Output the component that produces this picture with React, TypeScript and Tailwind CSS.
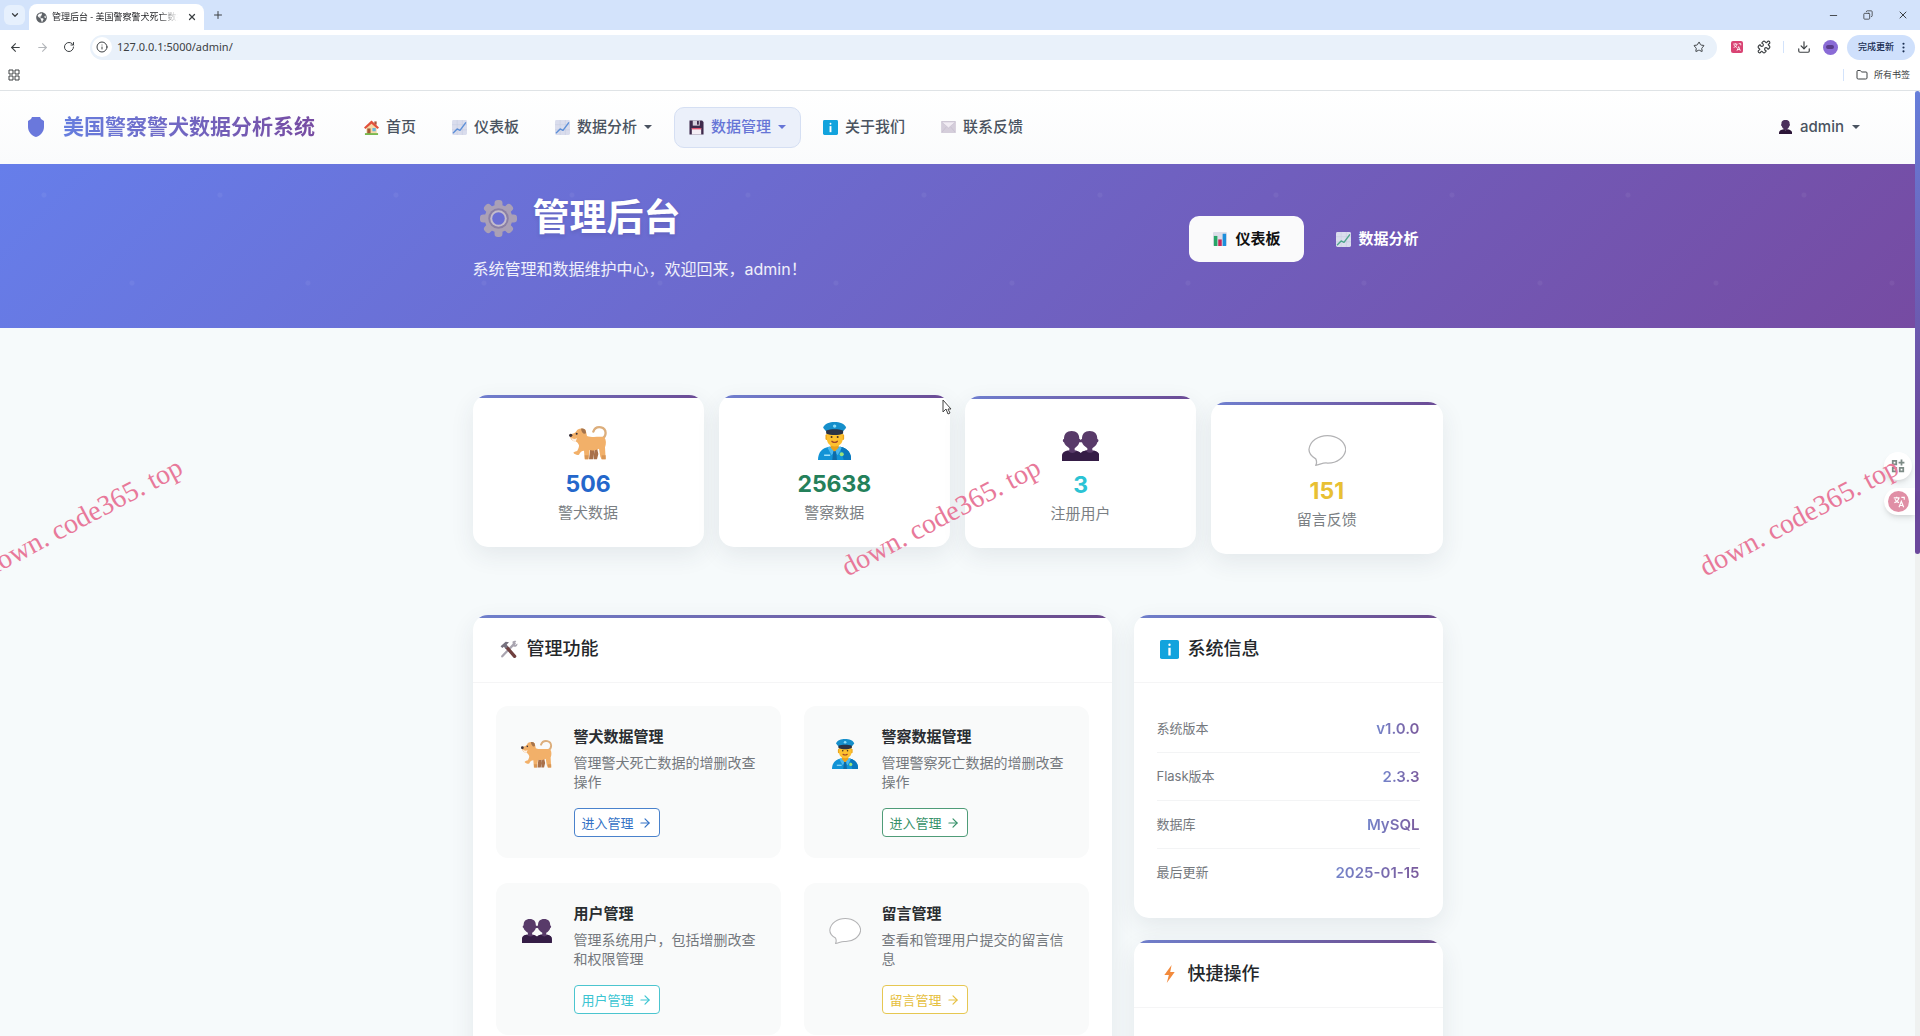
import type { ReactNode } from "react";
import {
  ArrowLeft,
  ArrowRight,
  ChevronDown,
  Copy,
  Download,
  EllipsisVertical,
  Folder,
  Info,
  LayoutGrid,
  Minus,
  Plus,
  Puzzle,
  RotateCw,
  Star,
  X,
} from "lucide-react";
import { FaGlobeAmericas } from "react-icons/fa";

type IconProps = { className?: string };

function DogIcon({ className }: IconProps) {
  return (
    <svg viewBox="0 0 114 102" className={className} aria-hidden="true">
      <path d="M98 38C114 32 114 8 96 4C84 2 76 8 73 17" fill="none" stroke="#dcae7c" strokeWidth="7" strokeLinecap="round" />
      <path d="M64 66L60 100H72L78 68ZM84 66L88 84L84 100H74L76 68Z" fill="#a9714b" />
      <path d="M22 16C26 6 42 5 50 12L54 30C70 36 92 30 106 34C112 42 112 54 108 64L110 100H98L94 92L90 68C80 74 68 74 62 72L58 100H47L45 74C38 74 34 78 30 86C24 88 17 85 13 80C16 76 22 76 25 74C28 68 30 64 30 58C28 52 24 48 20 46C12 46 6 42 3 32L6 24C12 24 18 22 22 16Z" fill="#f2b069" />
      <path d="M36 8C46 6 51 12 51 22C44 26 38 20 36 8Z" fill="#a5744d" />
      <path d="M6 34C12 40 18 40 24 36L20 47C12 47 8 42 6 34Z" fill="#fff1e4" />
      <circle cx="5" cy="28" r="5" fill="#38303a" />
      <circle cx="23" cy="23" r="3" fill="#38303a" />
      <path d="M47 88H59L58 100H48ZM98 88H110V100H98Z" fill="#d99655" />
    </svg>
  );
}

function OfficerIcon({ className }: IconProps) {
  return (
    <svg viewBox="0 0 98 112" className={className} aria-hidden="true">
      <path d="M0 112C0 90 12 77 32 73H66C86 77 98 90 98 112Z" fill="#1293d6" />
      <path d="M66 73C86 77 98 90 98 112H76L68 84Z" fill="#0b78bd" />
      <path d="M37 60H61V78L49 90L37 78Z" fill="#e8a21c" />
      <path d="M34 72L48 88L40 98L28 76ZM64 72L49 88L58 98L70 76Z" fill="#4bb8ee" />
      <path d="M45 86H53L56 112H42Z" fill="#0f6ba8" />
      <rect x="22" y="36" width="8" height="17" rx="4" fill="#eca51d" />
      <rect x="69" y="36" width="8" height="17" rx="4" fill="#eca51d" />
      <path d="M26 28H73V48C73 64 62 72 49 72C36 72 26 64 26 48Z" fill="#fdc02f" />
      <path d="M15 17C20 4 34 0 49 0C64 0 78 4 83 17L73 29H25Z" fill="#168fcb" />
      <path d="M24 25C38 20 60 20 74 25V34C60 40 38 40 24 34Z" fill="#2b3345" />
      <circle cx="49" cy="12" r="5" fill="#8edcf8" />
      <circle cx="40" cy="44" r="3" fill="#43302b" />
      <circle cx="58" cy="44" r="3" fill="#43302b" />
      <path d="M41 57Q49 63 57 57" fill="none" stroke="#a34a26" strokeWidth="4" strokeLinecap="round" />
      <circle cx="70" cy="95" r="6" fill="#9be37a" />
      <path d="M18 98H36" stroke="#9fe2fb" strokeWidth="4" />
    </svg>
  );
}

function UsersIcon({ className }: IconProps) {
  return (
    <svg viewBox="0 0 112 90" className={className} aria-hidden="true">
      <path d="M0 88V76C0 62 10 60 22 58V52C14 46 8 42 6 34C1 32 2 24 6 24C6 8 14 0 29 0C44 0 52 8 52 24C56 24 57 32 52 34C50 42 44 48 38 52V58C50 60 58 64 58 76V88Z" fill="#583a69" />
      <path d="M60 88V76C60 62 66 60 76 57V52C68 46 62 42 60 34C56 32 56 24 60 24C60 8 68 0 83 0C98 0 106 8 106 24C110 24 111 32 106 34C104 42 98 48 91 52V58C104 60 112 64 112 76V88Z" fill="#583a69" />
      <path d="M52 26H62V34H52Z" fill="#583a69" />
      <path d="M0 90V74C2 64 10 60 18 59Q30 72 44 60Q56 64 56 66Q62 58 72 59Q84 72 96 59C106 62 112 66 112 76V90Z" fill="#351d46" />
    </svg>
  );
}

function PersonIcon({ className }: IconProps) {
  return (
    <svg viewBox="0 0 58 62" className={className} aria-hidden="true">
      <path d="M29 0C44 0 48 8 47 18C50 20 48 26 46 27C44 34 40 38 37 40V44H21V40C18 38 14 34 12 27C9 26 8 20 11 18C10 8 14 0 29 0Z" fill="#4b305c" />
      <path d="M0 62V56C1 46 10 43 20 41Q29 50 38 41C48 43 57 46 58 56V62Z" fill="#2c1538" />
    </svg>
  );
}

function BubbleIcon({ className }: IconProps) {
  return (
    <svg viewBox="0 0 120 96" className={className} aria-hidden="true">
      <path d="M24 94C28 86 27 80 24 74C10 66 3 56 3 45C6 18 32 2 60 2C88 2 114 18 117 45C114 70 88 88 60 87C50 84 36 92 24 94Z" fill="#fff" stroke="#b3b3b5" strokeWidth="4" strokeLinejoin="round" />
    </svg>
  );
}

function GearIcon({ className }: IconProps) {
  return (
    <svg viewBox="0 0 112 112" className={className} aria-hidden="true">
      <g fill="#aaa0b6">
        {[0, 45, 90, 135].map((angle) => (
          <rect key={angle} x="44" y="0" width="24" height="112" rx="10" transform={`rotate(${angle} 56 56)`} />
        ))}
        <circle cx="56" cy="56" r="42" />
      </g>
      <circle cx="56" cy="56" r="31" fill="#8a7fa5" />
      <circle cx="56" cy="56" r="25" fill="#c4bccb" />
      <circle cx="56" cy="56" r="19" fill="#6a6ed4" />
    </svg>
  );
}

function HouseIcon({ className }: IconProps) {
  return (
    <svg viewBox="0 0 32 32" className={className} aria-hidden="true">
      <path d="M5 14L16 5L27 14V30H5Z" fill="#f5d9a8" />
      <path d="M22 3H27V10H22Z" fill="#a8573c" />
      <path d="M16 1L32 16L29 19L16 8L3 19L0 16Z" fill="#e2503c" />
      <path d="M7 18H14V30H7Z" fill="#a55a35" />
      <path d="M18 17H25V24H18Z" fill="#67b7dc" />
      <path d="M2 28H30V32H2Z" fill="#79b84f" />
    </svg>
  );
}

function TrendIcon({ className, line = "#5c8fd8" }: IconProps & { line?: string }) {
  return (
    <svg viewBox="0 0 32 32" className={className} aria-hidden="true">
      <rect width="32" height="32" rx="3" fill="#dadded" />
      <path d="M0 10H32M0 21H32M11 0V32M22 0V32" stroke="#c3c9de" strokeWidth="1" />
      <path d="M3 27L11 19L17 22L29 6" fill="none" stroke={line} strokeWidth="3" strokeLinecap="round" strokeLinejoin="round" />
    </svg>
  );
}

function BarsIcon({ className }: IconProps) {
  return (
    <svg viewBox="0 0 32 32" className={className} aria-hidden="true">
      <rect width="32" height="32" rx="3" fill="#dcdde8" />
      <path d="M2 9H10V32H2Z" fill="#27a567" />
      <path d="M12 17H20V32H12Z" fill="#c92658" />
      <path d="M22 4H30V32H22Z" fill="#1c8edb" />
    </svg>
  );
}

function FloppyIcon({ className }: IconProps) {
  return (
    <svg viewBox="0 0 32 32" className={className} aria-hidden="true">
      <path d="M1 1H28L31 4V31H1Z" fill="#3f2a4c" />
      <path d="M8 1H23V12H8Z" fill="#d8d2df" />
      <path d="M17 2H21V10H17Z" fill="#3f2a4c" />
      <path d="M6 17H26V31H6Z" fill="#f4eef5" />
      <path d="M6 17H26V20H6Z" fill="#e2526e" />
    </svg>
  );
}

function InfoSquareIcon({ className }: IconProps) {
  return (
    <svg viewBox="0 0 32 32" className={className} aria-hidden="true">
      <rect width="32" height="32" rx="3" fill="#12a3dd" />
      <circle cx="16" cy="8" r="2" fill="#fff" />
      <path d="M14 13H18V26H14Z" fill="#fff" />
    </svg>
  );
}

function EnvelopeIcon({ className }: IconProps) {
  return (
    <svg viewBox="0 0 32 26" className={className} aria-hidden="true">
      <rect width="32" height="26" rx="2" fill="#d5cedb" />
      <path d="M1 25L12 12M31 25L20 12" stroke="#bcb3c6" strokeWidth="1" />
      <path d="M1 2H31L16 15Z" fill="#f1ecf3" stroke="#bcb3c6" strokeWidth="1" />
    </svg>
  );
}

function ToolsIcon({ className }: IconProps) {
  return (
    <svg viewBox="0 0 32 32" className={className} aria-hidden="true">
      <path d="M4 29L26 6" stroke="#a9a5b0" strokeWidth="4" strokeLinecap="round" />
      <path d="M22 3C25 1 27 1 29 2L25 6L27 9L31 6C32 10 28 13 24 12Z" fill="#a9a5b0" />
      <path d="M12 13L26 29" stroke="#70403f" strokeWidth="6" strokeLinecap="round" />
      <path d="M1 11L10 3L16 4L12 8L14 12L10 16L7 12L4 14Z" fill="#77727f" />
    </svg>
  );
}

function BoltIcon({ className }: IconProps) {
  return (
    <svg viewBox="0 0 32 52" className={className} aria-hidden="true">
      <path d="M22 0L1 29H14L8 52L31 20H18Z" fill="#f28a3c" />
    </svg>
  );
}

function ShieldIcon({ className }: IconProps) {
  return (
    <svg viewBox="0 0 16 20" className={className} aria-hidden="true">
      <path d="M4 0H12L13 2L16 4V10C16 15 12 19 8 20C4 19 0 15 0 10V4L3 2Z" fill="#6a78dc" />
    </svg>
  );
}

function Caret() {
  return <span className="border-x-4 border-t-4 border-x-transparent border-t-current" />;
}

function TranslateMark({ className }: IconProps) {
  return (
    <svg viewBox="0 0 24 24" className={className} fill="none" stroke="#fff" strokeWidth="2" aria-hidden="true">
      <path d="M3 5H13M8 3V5M4 13C8 12 11 9 12 5M5 7C6 10 9 12 12 13M12 21L16 11L20 21M13 18H19M16 4H21V8" />
    </svg>
  );
}

const navItems = [
  { label: "首页", icon: <HouseIcon className="size-[15px]" /> },
  { label: "仪表板", icon: <TrendIcon className="size-[15px]" /> },
  { label: "数据分析", icon: <TrendIcon className="size-[15px]" />, menu: true },
  { label: "数据管理", icon: <FloppyIcon className="size-[15px]" />, menu: true, active: true },
  { label: "关于我们", icon: <InfoSquareIcon className="size-[15px]" /> },
  { label: "联系反馈", icon: <EnvelopeIcon className="h-3 w-[15px]" /> },
];

const stats = [
  { label: "警犬数据", value: "506", color: "text-[#2467cb]", rise: "mt-0", icon: <DogIcon className="h-[34px]" /> },
  { label: "警察数据", value: "25638", color: "text-[#24805a]", rise: "mt-0", icon: <OfficerIcon className="h-[38px]" /> },
  { label: "注册用户", value: "3", color: "text-[#2bc3d4]", rise: "mt-px", icon: <UsersIcon className="h-[30px]" /> },
  { label: "留言反馈", value: "151", color: "text-[#e8c033]", rise: "mt-[7px]", icon: <BubbleIcon className="h-8 pb-px" /> },
];

const features = [
  {
    title: "警犬数据管理",
    text: "管理警犬死亡数据的增删改查操作",
    action: "进入管理",
    tone: "border-[#4a82cc] text-[#3472c6]",
    icon: <DogIcon className="h-7" />,
  },
  {
    title: "警察数据管理",
    text: "管理警察死亡数据的增删改查操作",
    action: "进入管理",
    tone: "border-[#4f9c78] text-[#37926a]",
    icon: <OfficerIcon className="h-[30px]" />,
  },
  {
    title: "用户管理",
    text: "管理系统用户，包括增删改查和权限管理",
    action: "用户管理",
    tone: "border-[#4cc5cf] text-[#3cc5d2]",
    icon: <UsersIcon className="h-6" />,
  },
  {
    title: "留言管理",
    text: "查看和管理用户提交的留言信息",
    action: "留言管理",
    tone: "border-[#e6c752] text-[#e6c040]",
    icon: <BubbleIcon className="h-[26px]" />,
  },
];

const systemInfo = [
  { label: "系统版本", value: "v1.0.0" },
  { label: "Flask版本", value: "2.3.3" },
  { label: "数据库", value: "MySQL" },
  { label: "最后更新", value: "2025-01-15" },
];

function BrowserChrome() {
  return (
    <div className="shrink-0 bg-white font-['Noto_Sans','Noto_Sans_CJK_SC',sans-serif] text-[#3c4043]">
      <div className="flex h-[30px] items-center bg-[#d3e3fb] pl-1">
        <button type="button" aria-label="搜索标签页" className="mr-1 flex h-5 w-[21px] items-center justify-center rounded-md bg-[#e6f0fd]">
          <ChevronDown className="size-[10px]" strokeWidth={3} />
        </button>
        <div className="flex h-[26px] w-[175px] items-center gap-[5px] self-end rounded-t-lg bg-white px-[7px]">
          <FaGlobeAmericas className="size-[11px] shrink-0 text-[#5f6368]" />
          <span className="flex-1 overflow-hidden bg-linear-to-r from-[#202124] from-85% to-transparent bg-clip-text text-[9px] leading-4 whitespace-nowrap text-transparent">
            管理后台 - 美国警察警犬死亡数据
          </span>
          <button type="button" aria-label="关闭标签页" className="ml-1">
            <X className="size-[10px]" strokeWidth={3} />
          </button>
        </div>
        <button type="button" aria-label="新标签页" className="ml-2">
          <Plus className="size-3" />
        </button>
        <div className="ml-auto flex items-center gap-6 pr-[11px]">
          <button type="button" aria-label="最小化"><Minus className="size-[11px]" /></button>
          <button type="button" aria-label="还原"><Copy className="size-[10px] -scale-x-100" /></button>
          <button type="button" aria-label="关闭"><X className="size-3" /></button>
        </div>
      </div>

      <div className="flex h-[34px] items-center pr-[5px] pl-[9px]">
        <div className="flex w-[81px] items-center gap-[14px]">
          <button type="button" aria-label="后退"><ArrowLeft className="size-[13px]" /></button>
          <button type="button" aria-label="前进" className="text-[#b4b7bb]"><ArrowRight className="size-[13px]" /></button>
          <button type="button" aria-label="重新加载"><RotateCw className="size-3" /></button>
        </div>
        <div className="flex h-[25px] flex-1 items-center gap-[5px] rounded-full bg-[#e9f1fa] pr-3 pl-[2px]">
          <span className="flex size-5 items-center justify-center rounded-full bg-white">
            <Info className="size-3" />
          </span>
          <input aria-label="地址" className="flex-1 bg-transparent text-[11px] leading-4 outline-none" defaultValue="127.0.0.1:5000/admin/" />
          <button type="button" aria-label="收藏"><Star className="size-3" /></button>
        </div>
        <span className="ml-[14px] flex size-3 items-center justify-center rounded-[2px] bg-[#d94373]">
          <TranslateMark className="size-[10px]" />
        </span>
        <button type="button" aria-label="扩展程序" className="ml-[14px]"><Puzzle className="size-[14px]" /></button>
        <span className="ml-3 h-3 w-px bg-[#d3e3fb]" />
        <button type="button" aria-label="下载" className="ml-[13px]"><Download className="size-[14px]" /></button>
        <span className="ml-3 flex size-[15px] items-center justify-center rounded-full bg-[#8a6bd6]">
          <span className="h-1 w-2 rounded-full bg-[#5a3c8c]" />
        </span>
        <button type="button" className="ml-[9px] flex h-[25px] items-center gap-[3px] rounded-full bg-[#cfe0fc] pr-[5px] pl-[11px] text-[9px] leading-4 font-medium text-[#1b2f52]">
          完成更新
          <EllipsisVertical className="size-[13px]" />
        </button>
      </div>

      <div className="flex h-[27px] items-center border-b border-[#dfe3e6] pr-[10px] pb-1 pl-2">
        <svg viewBox="0 0 12 12" className="size-3" fill="none" stroke="currentColor" strokeWidth="1" aria-hidden="true">
          <path d="M1 1H5V5H1ZM7 1H11V5H7ZM1 7H5V11H1ZM7 7H11V11H7Z" />
        </svg>
        <span className="ml-auto h-3 w-px bg-[#d3e3fb]" />
        <button type="button" className="ml-3 flex items-center gap-[6px] text-[9px] leading-4">
          <Folder className="size-3" />
          所有书签
        </button>
      </div>
    </div>
  );
}

function Navbar() {
  return (
    <nav className="flex h-[73px] items-center bg-linear-to-b from-white to-[#fafbfc] pr-[40px] pb-px pl-7 text-[15px] leading-6 font-medium text-[#4a5360]">
      <a href="#home" className="flex items-center gap-[19px] text-[21px] leading-8 font-bold">
        <ShieldIcon className="h-5 w-4" />
        <span className="bg-linear-to-r from-[#667edf] to-[#764ba2] bg-clip-text text-transparent">
          美国警察警犬数据分析系统
        </span>
      </a>
      <div className="ml-[35px] flex items-center gap-2">
        {navItems.map((item) => {
          const className = item.active
            ? "flex h-[41px] items-center gap-[7px] rounded-[10px] border border-[#d5dff3] bg-[#ebf0fa] px-[14px] text-[#6675d6]"
            : "flex h-[41px] items-center gap-[7px] px-[14px]";
          return item.menu ? (
            <button key={item.label} type="button" className={className}>
              {item.icon}
              {item.label}
              <Caret />
            </button>
          ) : (
            <a key={item.label} href={`#${item.label}`} className={className}>
              {item.icon}
              {item.label}
            </a>
          );
        })}
      </div>
      <button type="button" className="ml-auto flex items-center gap-2 px-[15px]">
        <PersonIcon className="h-[14px]" />
        admin
        <Caret />
      </button>
    </nav>
  );
}

function Hero() {
  return (
    <header className="bg-[radial-gradient(circle_at_44px_31px,rgba(255,255,255,.05)_2px,transparent_3px),radial-gradient(circle_at_132px_119px,rgba(255,255,255,.05)_2px,transparent_3px),linear-gradient(135deg,#667eea,#764ba2)] bg-size-[176px_164px,176px_164px,100%_100%] pt-8 pb-[46px] text-white">
      <div className="mx-auto flex max-w-[970px] items-center justify-between">
        <div>
          <h1 className="flex items-center gap-4 pl-[7px] text-[37px] leading-[44px] font-bold [text-shadow:0_2px_4px_rgba(0,0,0,.1)]">
            <GearIcon className="size-[37px]" />
            管理后台
          </h1>
          <p className="mt-4 text-[16px] leading-[26px] text-white/90">系统管理和数据维护中心，欢迎回来，admin！</p>
        </div>
        <div className="flex gap-2 text-[15px] leading-6 font-bold">
          <a href="#dashboard" className="flex h-[46px] items-center gap-2 rounded-[10px] bg-[#fafafb] px-6 text-[#111]">
            <BarsIcon className="size-[14px]" />
            仪表板
          </a>
          <a href="#analysis" className="flex h-[46px] items-center gap-[7px] px-6">
            <TrendIcon className="size-[15px]" line="#4fa58c" />
            数据分析
          </a>
        </div>
      </div>
    </header>
  );
}

function Panel({ title, icon, children }: { title: string; icon: ReactNode; children: ReactNode }) {
  return (
    <section className="overflow-hidden rounded-[15px] bg-white shadow-[0_8px_25px_rgba(40,60,80,.09)]">
      <div className="h-[3px] bg-linear-to-r from-[#6f80cc] to-[#6b4a8c]" />
      <h2 className="flex h-[65px] items-center gap-2 border-b border-[#f5f5f6] px-[26px] pb-[2px] text-[18px] leading-7 font-medium text-[#24272b]">
        <span className="flex w-5 justify-center">{icon}</span>
        {title}
      </h2>
      {children}
    </section>
  );
}

function Watermark({ className }: { className: string }) {
  return (
    <span className={`pointer-events-none absolute top-[517px] -translate-x-1/2 -translate-y-1/2 -rotate-28 font-['Liberation_Serif',serif] text-[28px] leading-8 whitespace-nowrap text-[#e8799a] ${className}`}>
      down. code365. top
    </span>
  );
}

export default function App() {
  return (
    <div className="relative flex h-screen flex-col overflow-hidden bg-[#f6fafb] font-['Inter','Noto_Sans_CJK_SC',sans-serif]">
      <BrowserChrome />

      <div className="flex min-h-0 flex-1">
        <div className="min-w-0 flex-1 overflow-hidden">
          <Navbar />
          <Hero />

          <main className="mx-auto max-w-[970px] pt-[67px]">
            <div className="grid grid-cols-4 items-start gap-[15px]">
              {stats.map((stat) => (
                <div key={stat.label} className={`overflow-hidden rounded-[15px] bg-white pb-[22px] text-center shadow-[0_8px_25px_rgba(40,60,80,.09)] ${stat.rise}`}>
                  <div className="h-[3px] bg-linear-to-r from-[#6f80d0] to-[#6b4a94]" />
                  <div className="mt-6 flex h-[38px] items-end justify-center">{stat.icon}</div>
                  <p className={`mt-[10px] text-[23px] leading-7 font-bold ${stat.color}`}>{stat.value}</p>
                  <p className="mt-[3px] text-[15px] leading-6 text-[#7b7f84]">{stat.label}</p>
                </div>
              ))}
            </div>

            <div className="mt-[61px] grid grid-cols-[639fr_309fr] items-start gap-[22px]">
              <Panel title="管理功能" icon={<ToolsIcon className="size-[18px]" />}>
                <div className="grid grid-cols-2 gap-x-[23px] gap-y-[25px] p-[23px]">
                  {features.map((feature) => (
                    <div key={feature.title} className="flex gap-[18px] rounded-xl bg-[#f9fafa] px-[23px] py-[21px]">
                      <div className="mt-3 flex h-[30px] w-[37px] shrink-0 items-center justify-center">{feature.icon}</div>
                      <div>
                        <h3 className="text-[15px] leading-5 font-bold text-[#2a2d31]">{feature.title}</h3>
                        <p className="mt-[6px] text-[14px] leading-[19px] text-[#74787d]">{feature.text}</p>
                        <a href={`#${feature.title}`} className={`mt-[17px] inline-flex h-[29px] items-center gap-1 rounded-[4px] border bg-white px-[7px] text-[13px] leading-4 ${feature.tone}`}>
                          {feature.action}
                          <ArrowRight className="size-[14px]" />
                        </a>
                      </div>
                    </div>
                  ))}
                </div>
              </Panel>

              <div className="flex flex-col gap-[22px]">
                <Panel title="系统信息" icon={<InfoSquareIcon className="size-[19px]" />}>
                  <dl className="divide-y divide-[#f3f4f5] px-[23px] py-[22px]">
                    {systemInfo.map((row) => (
                      <div key={row.label} className="flex items-center justify-between py-3">
                        <dt className="text-[13px] leading-[23px] text-[#74787d]">{row.label}</dt>
                        <dd className="bg-linear-to-r from-[#7484ca] to-[#7a5a9c] bg-clip-text text-[15px] leading-[23px] font-semibold text-transparent">{row.value}</dd>
                      </div>
                    ))}
                  </dl>
                </Panel>
                <Panel title="快捷操作" icon={<BoltIcon className="h-[18px]" />}>
                  <div className="h-40" />
                </Panel>
              </div>
            </div>
          </main>
        </div>

        <div className="w-[5px] shrink-0 bg-[#eff1f0]">
          <div className="h-[49%] rounded-full bg-linear-to-b from-[#667eda] to-[#6b489c] to-75%" />
        </div>
      </div>

      <button type="button" aria-label="小工具" className="absolute top-[452px] right-2 flex size-7 items-center justify-center rounded-full bg-white shadow-md">
        <svg viewBox="0 0 24 24" className="size-[14px]" fill="none" stroke="#7d8b86" strokeWidth="3" aria-hidden="true">
          <path d="M3 3H9V9H3ZM3 15H9V21H3ZM15 15H21V21H15ZM18 1V11M13 6H23" />
        </svg>
      </button>
      <button type="button" aria-label="翻译" className="absolute top-[488px] right-[5px] flex h-[27px] w-[31px] items-center rounded-l-full bg-white pl-1 shadow-md">
        <span className="flex size-[21px] items-center justify-center rounded-full bg-[#e08fa6]">
          <TranslateMark className="size-[14px]" />
        </span>
      </button>

      <Watermark className="left-[83px]" />
      <Watermark className="left-[49%]" />
      <Watermark className="left-[1799px]" />

      <svg viewBox="0 0 10 16" className="absolute top-[399px] left-[942px] h-4 w-[10px]" aria-hidden="true">
        <path d="M1 1V13L4 10L6 15L8 14L6 10H9Z" fill="#fff" stroke="#444" strokeWidth="1" />
      </svg>
    </div>
  );
}
